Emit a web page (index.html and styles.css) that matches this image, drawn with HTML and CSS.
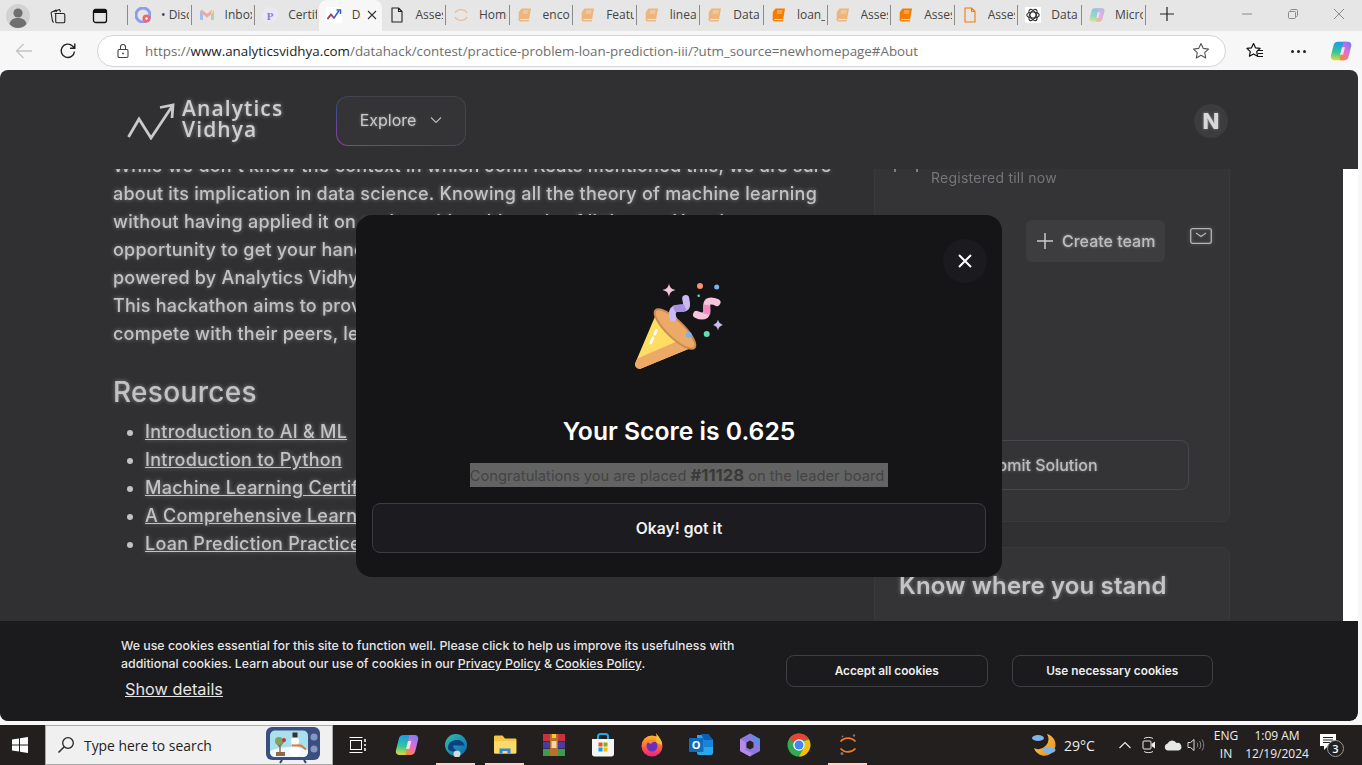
FILE: index.html
```html
<!DOCTYPE html>
<html lang="en">
<head>
<meta charset="utf-8">
<title>Practice Problem: Loan Prediction III</title>
<link rel="stylesheet" href="styles.css">
</head>
<body>
<svg class="defs" width="0" height="0" aria-hidden="true">
  <defs>
    <linearGradient id="cpA" x1="0.300" y1="0" x2="0.200" y2="1"><stop offset="0" stop-color="#1e9be8"/><stop offset=".55" stop-color="#2fc89a"/><stop offset="1" stop-color="#e6d83a"/></linearGradient>
    <linearGradient id="cpB" x1="0.900" y1="0" x2="0.300" y2="1"><stop offset="0" stop-color="#6f7cf2"/><stop offset=".5" stop-color="#d96ee0"/><stop offset="1" stop-color="#f7853c"/></linearGradient>
    <linearGradient id="edge" x1="0" y1="0" x2="1" y2="1"><stop offset="0" stop-color="#35c1a0"/><stop offset="1" stop-color="#0a62b8"/></linearGradient>
    <linearGradient id="fox" x1="0" y1="0" x2="0" y2="1"><stop offset="0" stop-color="#ffb52e"/><stop offset=".6" stop-color="#ff5a3c"/><stop offset="1" stop-color="#e8208a"/></linearGradient>
    <linearGradient id="moon" x1="0" y1="0" x2="1" y2="1"><stop offset="0" stop-color="#ffd24a"/><stop offset="1" stop-color="#e88a1c"/></linearGradient>
    <symbol id="i-book" viewBox="0 0 16 16"><path d="M4.500 1.500H14l-1.800 10.200H3L1.600 13.400 1.800 5z" fill="#f57c00"/><path d="M2 12.200c.3-.8.9-1 1.600-1h8.700l-.5 3.300H3.400c-1 0-1.600-1-1.400-2.300z" fill="#f57c00"/><path d="M3.400 12.600h8.400" stroke="#fff" stroke-width=".9"/><path d="M6 4h5.400M5.700 6h5.400" stroke="#ffd9a8" stroke-width=".8"/></symbol>
    <symbol id="i-doc" viewBox="0 0 16 16"><path d="M3 1h6.500L13 4.500V15H3z M9.500 1v3.500H13" fill="none" stroke="currentColor" stroke-width="1.100" stroke-linejoin="round"/></symbol>
    <symbol id="i-copilot" viewBox="0 0 24 24"><path d="M8.500 2h9.500L14 22H4.500C1.800 22 .4 20 1 17.300L3.800 6C4.300 3.600 6 2 8.500 2z" fill="url(#cpA)"/><path d="M15.500 22H10.500L14.500 2h5c2.800 0 4.200 2 3.600 4.700L20.300 18C19.700 20.400 18 22 15.500 22z" fill="url(#cpB)"/><path d="M13 8h3.300l-2 8H11z" fill="#fff" opacity=".75"/></symbol>
  </defs>
</svg>

<div class="browser">
  <header class="tabstrip">
    <div class="strip-left">
      <svg class="profile" viewBox="0 0 24 24" width="24" height="24"><circle cx="12" cy="12" r="12" fill="#d2d2d2"/><circle cx="12" cy="9" r="4.600" fill="#6f6f6f"/><path d="M3.500 20c1-4.500 4.500-6 8.500-6s7.500 1.500 8.500 6c-2 2.500-5 4-8.500 4s-6.500-1.500-8.500-4z" fill="#6f6f6f"/></svg>
      <svg class="strip-icon" viewBox="0 0 18 18" width="18" height="18"><path d="M2 5.500 7 3l.6 2M5 4.500 10.500 2.500l1 2.500M2 5.500 3.500 14c.1.800.6 1.200 1.500 1.200M6 6.500h8.500c.8 0 1.300.5 1.300 1.300v6.700c0 .9-.5 1.300-1.300 1.300H8c-.9 0-1.300-.5-1.300-1.300V7.800c0-.8-.3-1.300-.7-1.300z" fill="none" stroke="#222" stroke-width="1.100" stroke-linejoin="round"/></svg>
      <svg class="strip-icon" viewBox="0 0 16 16" width="16" height="16"><rect x="1.500" y="1.500" width="13" height="13" rx="2" fill="none" stroke="#111" stroke-width="1.300"/><path d="M1.500 5h13V3c0-1-.5-1.500-1.500-1.500H3C2 1.500 1.500 2 1.500 3z" fill="#111"/></svg>
    </div>
    <nav class="tabs">
      <div class="tab">
        <svg class="fav" viewBox="0 0 16 16"><circle cx="8" cy="8" r="7" fill="none" stroke="#8d9cf0" stroke-width="3"/><circle cx="11.500" cy="11.500" r="4" fill="#ea6a6a"/><circle cx="11.500" cy="11.500" r="1.300" fill="#fff"/></svg>
        <span class="tab-label">• Discord</span>
      </div>
      <div class="tab">
        <svg class="fav" viewBox="0 0 16 16"><path d="M1 4v9h3V7.500L8 10.500l4-3V13h3V4l-1.800-1.200L8 6.800 2.800 2.800z" fill="#f0a9a0"/><path d="M1 4v9h3V7.500z" fill="#9fc0f5"/><path d="M12 7.500V13h3V4z" fill="#a4d6b0"/><path d="M13.200 2.800 15 4l-3 3.500V5z" fill="#f8dc8a"/></svg>
        <span class="tab-label">Inbox (2)</span>
      </div>
      <div class="tab tab-nosep">
        <svg class="fav" viewBox="0 0 16 16"><circle cx="8" cy="8" r="8" fill="#e9e9f3"/><text class="fav-p" x="8" y="12.500" text-anchor="middle">P</text></svg>
        <span class="tab-label">Certificate</span>
      </div>
      <div class="tab tab-active">
        <svg class="fav fav-white" viewBox="0 0 16 16"><path d="M1.500 12 5 7.500l3 3.500 5-7.500" fill="none" stroke="#2b62c4" stroke-width="1.500"/><path d="M1.500 12 5 7.500l2 2.300" fill="none" stroke="#c43a52" stroke-width="1.500"/><path d="M10.500 3h4v4" fill="none" stroke="#2b62c4" stroke-width="1.500"/></svg>
        <span class="tab-label">Data</span>
        <svg class="tab-close" viewBox="0 0 10 10" width="10" height="10"><path d="M1 1l8 8M9 1l-8 8" stroke="#333" stroke-width="1.100"/></svg>
      </div>
      <div class="tab">
        <svg class="fav fav-dark"><use href="#i-doc"/></svg>
        <span class="tab-label">Assessment</span>
      </div>
      <div class="tab">
        <svg class="fav fav-faded" viewBox="0 0 16 16"><path d="M2 6a7 7 0 0 1 12 0M2 10a7 7 0 0 0 12 0" fill="none" stroke="#f08a3c" stroke-width="1.400"/></svg>
        <span class="tab-label">Home Page</span>
      </div>
      <div class="tab"><svg class="fav fav-faded"><use href="#i-book"/></svg><span class="tab-label">encoding</span></div>
      <div class="tab"><svg class="fav fav-faded"><use href="#i-book"/></svg><span class="tab-label">Feature</span></div>
      <div class="tab"><svg class="fav fav-faded"><use href="#i-book"/></svg><span class="tab-label">linear_reg</span></div>
      <div class="tab"><svg class="fav fav-faded"><use href="#i-book"/></svg><span class="tab-label">Data Pre</span></div>
      <div class="tab"><svg class="fav"><use href="#i-book"/></svg><span class="tab-label">loan_pred</span></div>
      <div class="tab"><svg class="fav fav-faded"><use href="#i-book"/></svg><span class="tab-label">Assessment</span></div>
      <div class="tab"><svg class="fav"><use href="#i-book"/></svg><span class="tab-label">Assessment</span></div>
      <div class="tab"><svg class="fav fav-orange"><use href="#i-doc"/></svg><span class="tab-label">Assessment</span></div>
      <div class="tab">
        <svg class="fav fav-white" viewBox="0 0 16 16"><g fill="none" stroke="#333" stroke-width="1.200"><ellipse cx="8" cy="8" rx="6.200" ry="3"/><ellipse cx="8" cy="8" rx="6.200" ry="3" transform="rotate(60 8 8)"/><ellipse cx="8" cy="8" rx="6.200" ry="3" transform="rotate(120 8 8)"/></g></svg>
        <span class="tab-label">Data</span>
      </div>
      <div class="tab"><svg class="fav fav-faded"><use href="#i-copilot"/></svg><span class="tab-label">Microsoft</span></div>
    </nav>
    <svg class="new-tab" viewBox="0 0 14 14" width="14" height="14"><path d="M7 0v14M0 7h14" stroke="#222" stroke-width="1.200"/></svg>
    <div class="window-controls">
      <svg viewBox="0 0 10 10" width="10" height="10"><path d="M0 5h10" stroke="#8a8a8a"/></svg>
      <svg viewBox="0 0 10 10" width="10" height="10"><path d="M2.500 2V1.500c0-.6.400-1 1-1h5c.6 0 1 .4 1 1v5c0 .6-.4 1-1 1H8M.5 3.500c0-.6.400-1 1-1h5c.6 0 1 .4 1 1v5c0 .6-.4 1-1 1h-5c-.6 0-1-.4-1-1z" fill="none" stroke="#8a8a8a"/></svg>
      <svg viewBox="0 0 10 10" width="10" height="10"><path d="M0 0l10 10M10 0L0 10" stroke="#8a8a8a"/></svg>
    </div>
  </header>

  <div class="toolbar">
    <svg class="tool" viewBox="0 0 18 18" width="18" height="18"><path d="M17 9H1.500M8.500 2 1.500 9l7 7" fill="none" stroke="#c4c4c4" stroke-width="1.300"/></svg>
    <svg class="tool" viewBox="0 0 18 18" width="18" height="18"><path d="M15.500 9.500A6.700 6.700 0 1 1 13.500 4L15.500 6M15.800 1.500V6.300H11" fill="none" stroke="#222" stroke-width="1.400"/></svg>
    <div class="address">
      <svg class="lock" viewBox="0 0 14 16" width="14" height="16"><path d="M4.500 6.500V4a2.500 2.500 0 0 1 5 0v2.500" fill="none" stroke="#444" stroke-width="1.100"/><rect x="2" y="6.500" width="10" height="8" rx="1.200" fill="none" stroke="#444" stroke-width="1.100"/><circle cx="7" cy="10.500" r=".9" fill="#444"/></svg>
      <span class="url">https://<b>www.analyticsvidhya.com</b>/datahack/contest/practice-problem-loan-prediction-iii/?utm_source=newhomepage#About</span>
      <svg class="star" viewBox="0 0 18 18" width="18" height="18"><path d="M9 1.500l2.300 4.900 5.200.7-3.800 3.600 1 5.200L9 13.300l-4.700 2.600 1-5.200L1.500 7.100l5.200-.7z" fill="none" stroke="#555" stroke-width="1.100" stroke-linejoin="round"/></svg>
    </div>
    <svg class="tool-fav" viewBox="0 0 18 18" width="18" height="18"><path d="M7.500 1.500l2 4.300 4.600.6-3.400 3.200.9 4.600-4.100-2.300-4.100 2.300.9-4.600L.9 6.400l4.600-.6z" fill="none" stroke="#111" stroke-width="1.200" stroke-linejoin="round"/><path d="M11 8.500h6M12 11.500h5M11.500 14.500h5.500" stroke="#111" stroke-width="1.100"/></svg>
    <span class="tool-more"><i></i><i></i><i></i></span>
    <svg class="tool-copilot"><use href="#i-copilot"/></svg>
  </div>

  <div class="viewport">
    <div class="site-header">
      <a class="logo">
        <svg viewBox="0 0 50 38" width="50" height="38"><path d="M1.500 35 12 17l12 19L46 3M33 5.500 46 3l-1 13" fill="none" stroke="#c9c9c9" stroke-width="2.800"/></svg>
        <span class="logo-text">Analytics<br>Vidhya</span>
      </a>
      <button class="explore">Explore
        <svg viewBox="0 0 12 8" width="12" height="8"><path d="M1 1.500 6 6.500 11 1.500" fill="none" stroke="#bdbdbd" stroke-width="1.100"/></svg>
      </button>
      <span class="avatar">N</span>
    </div>

    <div class="page">
      <main class="article">
        <p class="para">While we don't know the context in which John Keats mentioned this, we are sure</p>
        <p class="para">about its implication in data science. Knowing all the theory of machine learning</p>
        <p class="para">without having applied it on real-world problems is of little use. Here is an</p>
        <p class="para">opportunity to get your hands dirty with a practice problem</p>
        <p class="para">powered by Analytics Vidhya.</p>
        <p class="para">This hackathon aims to provide a platform for learners to</p>
        <p class="para">compete with their peers, learn and grow.</p>
        <h2 class="section-title">Resources</h2>
        <ul class="resources">
          <li><a>Introduction to AI &amp; ML</a></li>
          <li><a>Introduction to Python</a></li>
          <li><a>Machine Learning Certification</a></li>
          <li><a>A Comprehensive Learning Path</a></li>
          <li><a>Loan Prediction Practice Problem</a></li>
        </ul>
      </main>
      <aside class="sidebar">
        <section class="card card-register">
          <div class="register-head">
            <svg class="reg-icon" viewBox="0 0 26 4" width="26" height="4"><path d="M1 0v3M23 0v3" stroke="#9a9a9a" stroke-width="1.500"/></svg>
            <p class="registered">Registered till now</p>
          </div>
          <div class="team-row">
            <button class="create-team">
              <svg viewBox="0 0 16 16" width="16" height="16"><path d="M8 0v16M0 8h16" stroke="#c9c9c9" stroke-width="1.500"/></svg>
              Create team
            </button>
            <svg class="mail" viewBox="0 0 22 16" width="22" height="16"><rect x=".7" y=".7" width="20.600" height="14.600" rx="2" fill="none" stroke="#b5b5b5" stroke-width="1.300"/><path d="M6 5l5 3.500L16 5" fill="none" stroke="#b5b5b5" stroke-width="1.200"/></svg>
          </div>
          <button class="submit">Submit Solution</button>
        </section>
        <section class="card card-stand">
          <h3 class="stand-title">Know where you stand</h3>
        </section>
      </aside>
    </div>

    <div class="modal" role="dialog">
      <button class="modal-close" aria-label="Close">
        <svg viewBox="0 0 14 14" width="14" height="14"><path d="M1 1l12 12M13 1 1 13" stroke="#fff" stroke-width="2"/></svg>
      </button>
      <svg class="confetti" viewBox="74 52 90 88" width="90" height="88">
        <path d="M96.500 83c1-2.500 3.500-3.500 6-2.500L133 113c1.500 2 1 4-1 4.500L81 138.500c-4 1-7-2.500-5.500-6z" fill="#ffdd63"/>
        <path d="M77.500 128.500 116.500 111.500 133 114.500c1 1.500.5 2.500-1 3L81 138.500c-4 1-7-2.500-5.500-6z" fill="#edaa66"/>
        <ellipse cx="115" cy="99" rx="27" ry="8.500" transform="rotate(44 115 99)" fill="#eda966" stroke="#c98c58" stroke-width="2"/>
        <path d="M96.500 100.500l-1.800 3.500M93 108l-2.300 5" stroke="#fff" stroke-width="2.800" stroke-linecap="round"/>
        <circle cx="128.700" cy="105" r="3" fill="#7db2ee"/>
        <path d="M113 88c-1.500-4-1-9 4-9.500 5.500-.5 9 .5 9.500-3 .3-3-.5-4.500-.8-7" fill="none" stroke="#c9bbf2" stroke-width="7" stroke-linecap="round"/>
        <path d="M114 79c4-1.500 8-.5 11-2" fill="none" stroke="#a78ee2" stroke-width="7"/>
        <path d="M157 72.500c-4-2-9-2.500-10 1-1 3.500 1 9-1.500 11.500-3 2-6 1-9-.5" fill="none" stroke="#f8c4dc" stroke-width="7" stroke-linecap="round"/>
        <path d="M146.800 75c-.5 3 .5 6 0 9" fill="none" stroke="#f08dbe" stroke-width="7"/>
        <path d="M109 53.500c.8 4 2.300 5.500 6.500 6.500-4.200 1-5.700 2.500-6.500 7-.8-4.500-2.300-6-6.500-7 4.200-1 5.700-2.500 6.500-6.500z" fill="#f8c4dc"/>
        <path d="M158 89.500c.6 2.800 1.700 3.900 4.800 5.500-3.100 1.200-4.200 2.300-4.800 5.500-.6-3.200-1.700-4.300-4.800-5.500 3.100-1.600 4.200-2.700 4.800-5.500z" fill="#c9bbf2"/>
        <circle cx="140" cy="56" r="3" fill="#f8946c"/>
        <circle cx="156.700" cy="57" r="2.500" fill="#7db2ee"/>
        <circle cx="138.700" cy="65.700" r="1.300" fill="#5fe0b0"/>
        <circle cx="146.700" cy="104" r="3" fill="#5fe0b0"/>
      </svg>
      <h2 class="score">Your Score is 0.625</h2>
      <p class="placed"><span class="selected">Congratulations you are placed <b>#11128</b> on the leader board</span></p>
      <button class="got-it">Okay! got it</button>
    </div>

    <div class="cookies">
      <div class="cookie-copy">
        <p class="cookie-text">We use cookies essential for this site to function well. Please click to help us improve its usefulness with additional cookies. Learn about our use of cookies in our <a>Privacy Policy</a> &amp; <a>Cookies Policy</a>.</p>
        <a class="cookie-details">Show details</a>
      </div>
      <div class="cookie-actions">
        <button class="cookie-btn">Accept all cookies</button>
        <button class="cookie-btn">Use necessary cookies</button>
      </div>
    </div>
  </div>

  <footer class="taskbar">
    <svg class="start" viewBox="0 0 16 16" width="16" height="16"><path d="M0 2.500 7 1.500V7.500H0zM8 1.300 16 0V7.500H8zM0 8.500H7V14.500L0 13.500zM8 8.500H16V16L8 14.700z" fill="#fff"/></svg>
    <div class="search">
      <svg viewBox="0 0 18 18" width="18" height="18"><circle cx="11" cy="7" r="5.300" fill="none" stroke="#222" stroke-width="1.300"/><path d="M7 11 1.500 16.500" stroke="#222" stroke-width="1.500"/></svg>
      <span class="search-text">Type here to search</span>
      <svg class="tv" viewBox="0 0 54 38" width="54" height="38">
        <path d="M16 34l-2 3M38 34l2 3" stroke="#2d4068" stroke-width="2"/>
        <rect x="0" y="1" width="54" height="33" rx="6" fill="#3a4f80"/>
        <rect x="4" y="4.500" width="38" height="26" rx="5" fill="#a9e0ee"/>
        <path d="M4 25c10-5 28-5 38-1v2c0 3-2 5-5 5H9c-3 0-5-2-5-5z" fill="#f2f7fb"/>
        <path d="M14 27V16M14 21l-4-5M14 20l4-5" stroke="#8a6a48" stroke-width="1.400"/>
        <circle cx="13" cy="15" r="4" fill="#7fa264"/><circle cx="18" cy="14" r="2" fill="#c7352c"/>
        <rect x="10" y="26" width="9" height="4" fill="#8a6a48"/>
        <circle cx="29" cy="25" r="5.500" fill="#fff"/><circle cx="29" cy="15" r="4" fill="#fff"/>
        <rect x="26.500" y="6.500" width="5" height="5" fill="#333"/>
        <path d="M26 19.500h9l5 4" fill="none" stroke="#e8742c" stroke-width="2"/>
        <circle cx="48" cy="11" r="3.500" fill="#8695c2"/><circle cx="48" cy="23" r="3.500" fill="#8695c2"/>
      </svg>
    </div>
    <div class="task-apps">
      <span class="app"><svg viewBox="0 0 18 18" width="18" height="18"><path d="M.5 1.500h13M.5 16.500h13" stroke="#fff"/><rect x="1.500" y="4.500" width="11" height="9" fill="none" stroke="#fff"/><path d="M16 3v3M16 8v2M16 12v3" stroke="#fff" stroke-width="1.500"/></svg></span>
      <span class="app"><svg viewBox="0 0 24 24" width="24" height="24"><use href="#i-copilot"/></svg></span>
      <span class="app app-on"><svg viewBox="0 0 24 24" width="24" height="24"><circle cx="12" cy="12" r="11" fill="url(#edge)"/><path d="M4 15c0-6 5-8 9-8 3.500 0 7 2 7.500 5.500H9c0 3 3 5 6 5-5 2-11 1-11-2.500z" fill="#0b3f86"/><circle cx="13" cy="21" r="3.500" fill="#d8d8d8"/></svg></span>
      <span class="app app-on"><svg viewBox="0 0 24 24" width="24" height="24"><path d="M1 4c0-1 .5-1.500 1.500-1.500h7l2.500 3h10c1 0 1.500.5 1.500 1.500v12c0 1-.5 1.500-1.500 1.500h-19C1.500 20.500 1 20 1 19z" fill="#f6c644"/><path d="M1 8h22v11c0 1-.5 1.500-1.500 1.500h-19C1.500 20.500 1 20 1 19z" fill="#fcd968"/><path d="M6.500 20.500V15.500h11v5h-3v-2.500h-5v2.500z" fill="#2a8ad6"/></svg></span>
      <span class="app"><svg viewBox="0 0 24 24" width="24" height="24"><rect x="1" y="1" width="22" height="7" fill="#c8323c"/><rect x="1" y="8.500" width="22" height="7" fill="#4a3c9a"/><rect x="1" y="16" width="22" height="7" fill="#3f9a4a"/><rect x="8" y="1" width="8" height="22" fill="#b8702c"/><rect x="9.500" y="8" width="5" height="7" fill="#f3d9a0"/><path d="M10 1h4v4h-4z" fill="#f5c83c"/></svg></span>
      <span class="app"><svg viewBox="0 0 24 24" width="24" height="24"><path d="M7 6V3.500C7 2 8 1 9.500 1h5C16 1 17 2 17 3.500V6" fill="none" stroke="#29a8e0" stroke-width="2"/><path d="M1 6h22v15c0 1.500-1 2.500-2.500 2.500h-17C2 23.500 1 22.500 1 21z" fill="#f5f5f5"/><rect x="7.500" y="9.500" width="4" height="4" fill="#f25022"/><rect x="12.500" y="9.500" width="4" height="4" fill="#7fba00"/><rect x="7.500" y="14.500" width="4" height="4" fill="#00a4ef"/><rect x="12.500" y="14.500" width="4" height="4" fill="#ffb900"/></svg></span>
      <span class="app"><svg viewBox="0 0 24 24" width="24" height="24"><circle cx="12" cy="13" r="10.500" fill="url(#fox)"/><path d="M16 0c3 4 6 7 6 12l-7-3c1-3 2-6 1-9z" fill="#ffbe2e"/><circle cx="12" cy="13" r="5.500" fill="#6a2fc0"/><path d="M6 8c3-2 9-2 11 1-3-.5-5 0-6 2-2-1-4-2-5-3z" fill="#ff8a2e"/></svg></span>
      <span class="app"><svg viewBox="0 0 24 24" width="24" height="24"><path d="M8 2h11l5 5v13c0 1-1 2-2 2H10c-1 0-2-1-2-2z" fill="#28a8ea"/><path d="M12 1h7.500L24 7h-9z" fill="#0a5fb4"/><path d="M15 7h9v7H15z" fill="#1784d8"/><rect x="0" y="5" width="14.500" height="14" rx="1.200" fill="#0f6cbd"/><text class="app-o" x="7.200" y="16.200" text-anchor="middle">O</text></svg></span>
      <span class="app"><svg viewBox="0 0 24 24" width="24" height="24"><path d="M12 .5 22 6v12l-10 5.500L2 18V6z" fill="#8d78e0"/><path d="M2 6l5.500 3v8L14 20l-2 3.500L2 18z" fill="#b58ae8"/><path d="M12 .5 22 6v7l-6-3.500V6z" fill="#5f8ae8"/><path d="M8.500 9.500 12 7.500l3.500 2v5L12 16.500l-3.500-2z" fill="#26221f"/></svg></span>
      <span class="app"><svg viewBox="0 0 24 24" width="24" height="24"><circle cx="12" cy="12" r="11.500" fill="#34a853"/><path d="M12 .5A11.500 11.500 0 0 1 22 6.500H12A5.500 5.500 0 0 0 6.800 9.800L2.700 5A11.500 11.500 0 0 1 12 .5z" fill="#ea4335"/><path d="M22 6.500A11.500 11.500 0 0 1 12 23.500L16.800 15A5.500 5.500 0 0 0 16.500 8.500z" fill="#fbbc05"/><circle cx="12" cy="12" r="5.800" fill="#fff"/><circle cx="12" cy="12" r="4.500" fill="#4285f4"/></svg></span>
      <span class="app app-on"><svg viewBox="0 0 18 24" width="18" height="24"><path d="M1.500 8.500c4-4.500 11-4.500 15 0M1.500 15.500c4 4.500 11 4.500 15 0" fill="none" stroke="#f37726" stroke-width="1.800"/><circle cx="15" cy="2.500" r="1.200" fill="#777"/><circle cx="3" cy="20.500" r="1.500" fill="#777"/><circle cx="3.500" cy="3.500" r=".9" fill="#777"/></svg></span>
    </div>
    <div class="tray">
      <svg class="tray-weather" viewBox="0 0 24 24" width="24" height="24"><path d="M15 1a11 11 0 1 1-13 14A10 10 0 0 0 15 1z" fill="url(#moon)"/><ellipse cx="6" cy="5" rx="6" ry="3" fill="#7fb4ea"/><ellipse cx="17" cy="17" rx="6.500" ry="3.200" fill="#7fb4ea"/></svg>
      <span class="temp">29°C</span>
      <svg class="tray-chevron" viewBox="0 0 12 8" width="12" height="8"><path d="M.5 7 6 1.500 11.500 7" fill="none" stroke="#eee" stroke-width="1.100"/></svg>
      <svg class="tray-meet" viewBox="0 0 14 18" width="14" height="18"><path d="M2 2.500c2-1.500 7-1.500 9 0M2 15.500c2 1.500 7 1.500 9 0" fill="none" stroke="#ddd"/><rect x="1" y="5" width="8" height="8" rx="1" fill="none" stroke="#eee"/><path d="M9.500 8 13 5.500v7L9.500 10z" fill="#eee"/></svg>
      <svg class="tray-cloud" viewBox="0 0 18 12" width="18" height="12"><path d="M4 11.500a3.500 3.500 0 0 1-.5-6.900A5 5 0 0 1 12.500 4 3.800 3.800 0 0 1 14.500 11.500z" fill="#e6e6e6"/></svg>
      <svg class="tray-sound" viewBox="0 0 18 14" width="18" height="14"><path d="M1 4.500h2.500L7 1.500v11L3.500 9.500H1z" fill="none" stroke="#ddd"/><path d="M10 4.500c1 1.500 1 3.500 0 5M12.500 3c1.700 2.500 1.700 5.500 0 8M15 1.500c2.300 3.500 2.300 7.500 0 11" fill="none" stroke="#888"/></svg>
      <div class="lang"><span>ENG</span><span>IN</span></div>
      <div class="clock"><span>1:09 AM</span><span>12/19/2024</span></div>
      <div class="notify">
        <svg viewBox="0 0 16 16" width="16" height="16"><path d="M0 0h16v12H8l-4 4v-4H0z" fill="#fff"/><path d="M3 3.500h10M3 6h10M3 8.500h7" stroke="#222"/></svg>
        <span class="notify-badge">3</span>
      </div>
    </div>
  </footer>
</div>
</body>
</html>
```

FILE: styles.css
```css
* { box-sizing: border-box; }
html, body { margin: 0; height: 100%; }
body { overflow: hidden; background: #f7f7f7; font-family: "Inter", "Liberation Sans", sans-serif; }
p, h2, h3, ul { margin: 0; }
button { font-family: inherit; cursor: pointer; }
.defs { display: block; height: 0; }

.browser { display: flex; flex-direction: column; height: 765px; width: 1362px; }

/* tab strip */
.tabstrip { flex: 0 0 31px; display: flex; align-items: center; background: #e6e6e6; font-family: "Open Sans", "Noto Sans", sans-serif; font-size: 12px; color: #444; }
.strip-left { flex: 0 0 127px; display: flex; align-items: center; height: 31px; padding-left: 6px; }
.profile { margin-right: 19px; }
.strip-icon { margin-right: 25px; }
.strip-icon:last-child { margin-right: 0; }
.tabs { display: flex; height: 31px; }
.tabs::before { content: ""; width: 1px; height: 20px; margin-top: 5px; background: #8a8a8a; flex: none; }
.tab { flex: 0 0 63.6px; width: 63.6px; height: 31px; display: flex; align-items: center; padding-left: 7px; }
.tab::after { content: ""; flex: none; width: 1px; height: 20px; margin-top: -2px; background: #8a8a8a; }
.tab-nosep::after, .tab-active::after { display: none; }
.tab-active { background: #f7f7f7; border-radius: 8px 8px 0 0; padding-right: 10px; }
.fav { flex: none; width: 16px; height: 16px; margin-top: -2px; margin-right: 10px; }
.fav-faded { opacity: .45; }
.fav-white { background: #fff; }
.fav-dark { color: #222; }
.fav-orange { color: #f57c00; }
.fav-p { font: 700 11px "Liberation Serif", serif; fill: #8080dd; }
.tab-label { flex: 1 1 0; min-width: 0; overflow: hidden; white-space: nowrap; margin-top: -3px; margin-right: 2px; }
.tab-active .tab-label { flex: 0 0 9px; margin-right: 6px; }
.tab-close { flex: none; margin-top: -2px; }
.new-tab { margin-left: 14px; margin-top: -3px; flex: none; }
.window-controls { margin-left: auto; display: flex; gap: 36px; padding-right: 18px; margin-top: -3px; }

/* toolbar */
.toolbar { flex: 0 0 39px; display: flex; align-items: center; background: #f7f7f7; padding: 1px 0 0 15px; }
.tool { flex: none; margin-right: 26px; }
.address { flex: 0 0 1129px; height: 32px; margin-left: -6px; display: flex; align-items: center; background: #fff; border: 1px solid #d4d4d4; border-radius: 16px; padding: 0 15px 0 18px; }
.lock { flex: none; margin-right: 15px; }
.url { flex: 1; white-space: nowrap; font: 13.370px/18px "Open Sans", sans-serif; color: #6e6e6e; }
.url b { font-weight: 400; color: #1c1c1c; }
.star { flex: none; }
.tool-fav { flex: none; margin-left: 20px; }
.tool-more { flex: none; display: flex; gap: 3px; margin-left: 27px; }
.tool-more i { width: 3px; height: 3px; border-radius: 50%; background: #222; }
.tool-copilot { flex: none; width: 22px; height: 22px; margin-left: 24px; }

/* browser viewport */
.viewport { position: relative; flex: 0 0 651px; width: 1358px; display: flex; flex-direction: column; overflow: hidden; background: #fff; border-radius: 8px; }
.site-header { flex: 0 0 99px; display: flex; align-items: center; background: #302f32; padding: 2px 130px 0 127px; position: relative; z-index: 1; }
.logo { display: flex; align-items: center; gap: 5px; width: 209px; color: #cfcfcf; filter: blur(.5px); }
.logo-text { font: 600 21px/21px "Open Sans", sans-serif; letter-spacing: 1.100px; margin-top: -3px; text-shadow: 0 0 4px rgba(255,255,255,.45); }
.explore { display: flex; align-items: center; justify-content: center; gap: 14px; width: 130px; height: 50px; padding-bottom: 2px; border-radius: 12px; border: 1px solid transparent; background: linear-gradient(#343336, #343336) padding-box, linear-gradient(to top right, #93409f 0%, #3f4f8e 35%, #444347 60%) border-box; color: #c9c9c9; font-size: 16px; text-shadow: 0 0 3px rgba(255,255,255,.4); filter: blur(.4px); }
.avatar { margin-left: auto; width: 34px; height: 34px; border-radius: 50%; background: #3c3b3e; color: #d8d8d8; font-weight: 800; font-size: 22px; display: flex; align-items: center; justify-content: center; text-shadow: 0 0 3px rgba(255,255,255,.4); filter: blur(.5px); }

/* blurred page */
.page { flex: 1; margin-right: 15px; display: grid; grid-template-columns: 761px 356px; padding-left: 113px; background: #302f32; overflow: hidden; align-items: start; filter: blur(.6px); }
.article { margin-top: -17px; color: #c2c2c2; text-shadow: 0 0 4px rgba(255,255,255,.4); }
.para { font-size: 18px; line-height: 28px; font-weight: 500; letter-spacing: .23px; white-space: nowrap; }
.section-title { font-size: 28px; line-height: 36px; font-weight: 500; letter-spacing: .33px; margin-top: 26px; }
.resources { padding-left: 32px; margin-top: 8px; }
.resources li { font-size: 18px; line-height: 28px; font-weight: 500; letter-spacing: .26px; }
.resources a { text-decoration: underline; }

.card { background: #343336; border: 1px solid #39383b; border-top: 0; border-radius: 0 0 8px 8px; }
.card-register { height: 353px; display: flex; flex-direction: column; align-items: flex-end; }
.register-head { align-self: flex-start; display: flex; align-items: flex-start; gap: 11px; margin-left: 19px; }
.registered { font-size: 14px; line-height: 18px; letter-spacing: .25px; color: #767578; }
.team-row { display: flex; align-items: flex-start; gap: 25px; margin: 33px 17px 0 0; }
.create-team { width: 139px; height: 42px; display: flex; align-items: center; gap: 9px; padding: 0 0 0 11px; background: #3d3c3f; border: 0; border-radius: 6px; color: #bdbdbd; font-size: 16px; font-weight: 500; text-shadow: 0 0 3px rgba(255,255,255,.4); }
.mail { margin-top: 8px; filter: drop-shadow(0 0 2px rgba(255,255,255,.3)); }
.submit { width: 303px; height: 50px; margin: 178px 40px 0 0; background: transparent; border: 1px solid #47464a; border-radius: 8px; color: #bdbdbd; font-size: 16px; font-weight: 500; text-shadow: 0 0 3px rgba(255,255,255,.4); }
.card-stand { margin-top: 25px; height: 200px; border: 1px solid #39383b; border-radius: 8px; padding: 21px 0 0 24px; }
.stand-title { font-size: 24px; line-height: 34px; font-weight: 600; letter-spacing: .15px; color: #c4c4c4; text-shadow: 0 0 4px rgba(255,255,255,.4); white-space: nowrap; }

/* modal */
.modal { position: absolute; left: 356px; top: 145px; width: 646px; height: 362px; z-index: 2; display: flex; flex-direction: column; align-items: center; padding: 67px 16px 24px; background: #151417; border-radius: 16px; }
.modal-close { position: absolute; right: 15px; top: 24px; width: 44px; height: 44px; border: 0; border-radius: 50%; background: #1b1a1e; display: flex; align-items: center; justify-content: center; padding: 0; }
.confetti { flex: none; }
.score { margin-top: 45px; font-size: 24.700px; line-height: 32px; font-weight: 600; color: #fff; }
.placed { margin-top: 16px; height: 24px; font-size: 14.700px; line-height: 24px; color: #444; white-space: nowrap; }
.selected { display: block; height: 24px; background: #636363; padding-right: 4px; }
.selected b { font-size: 16.600px; font-weight: 700; color: #3a3a3a; }
.got-it { margin-top: 16px; width: 100%; height: 50px; background: #1c1b1f; border: 1px solid #3c3b3f; border-radius: 8px; color: #f2f2f2; font-size: 15.700px; font-weight: 600; }

/* cookie banner */
.cookies { position: absolute; left: 0; right: 0; bottom: 0; height: 100px; z-index: 3; background: #1b1a1d; border-radius: 0 0 8px 8px; display: flex; padding: 16px 145px 0 121px; }
.cookie-copy { flex: 0 0 665px; color: #e6e6e6; }
.cookie-text { width: 620px; font-size: 12.350px; line-height: 18px; font-weight: 500; }
.cookie-text a { text-decoration: underline; }
.cookie-details { display: inline-block; margin: 4px 0 0 4px; font-size: 16.300px; line-height: 24px; text-decoration: underline; }
.cookie-actions { display: flex; gap: 24px; margin-top: 18px; align-items: flex-start; }
.cookie-btn { width: 201.500px; height: 32px; background: transparent; border: 1px solid #403f43; border-radius: 8px; color: #ececec; font-size: 11.800px; font-weight: 600; }

/* taskbar */
.taskbar { flex: 0 0 40px; margin-top: 4px; display: flex; align-items: center; background: #221f1e; color: #eee; font-family: "Open Sans", "Noto Sans", sans-serif; }
.start { flex: none; margin: 0 17px 0 12px; }
.search { flex: 0 0 288px; height: 40px; display: flex; align-items: center; background: #f0f0f0; border: 1px solid #a9a9a9; padding-left: 11px; }
.search-text { margin-left: 9px; font-size: 13.900px; color: #222; white-space: nowrap; width: 183px; }
.tv { flex: none; margin-left: -1px; }
.task-apps { display: flex; }
.app { flex: 0 0 49px; height: 40px; display: flex; align-items: center; justify-content: center; position: relative; }
.app-on::after { content: ""; position: absolute; left: 5px; right: 5px; bottom: 0; height: 2px; background: #ffd3c2; }
.app-o { font: 700 11px "Open Sans", sans-serif; fill: #fff; }
.tray { margin-left: auto; display: flex; align-items: center; height: 40px; }
.tray-weather { margin-right: 8px; }
.temp { font-size: 14px; width: 55px; }
.tray-chevron { margin-right: 11px; }
.tray-meet { margin-right: 8px; }
.tray-cloud { margin-right: 5px; }
.tray-sound { margin-right: 3px; }
.lang, .clock { display: flex; flex-direction: column; align-items: center; font-size: 12px; line-height: 18px; }
.lang { width: 36px; }
.clock { width: 62px; margin-left: 2px; white-space: nowrap; }
.notify { position: relative; margin-left: 12px; width: 28px; height: 28px; padding-top: 2px; margin-right: 14px; }
.notify-badge { position: absolute; left: 7px; top: 9px; width: 17px; height: 17px; border-radius: 50%; background: #222; border: 1px solid #999; font-size: 11px; line-height: 15px; text-align: center; color: #fff; font-weight: 600; }
```
